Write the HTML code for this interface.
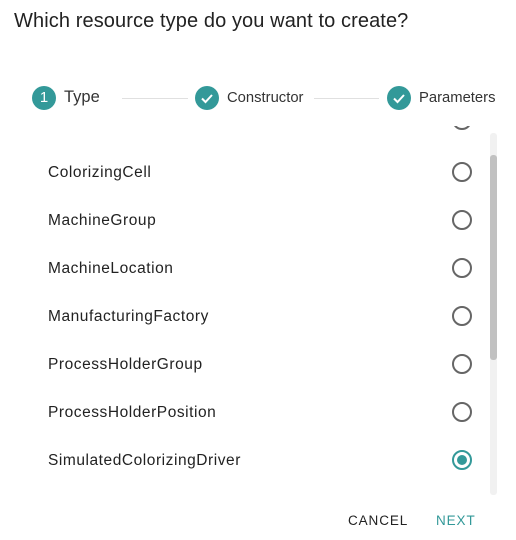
<!DOCTYPE html><html><head><style>
body{margin:0;width:516px;height:540px;background:#fff;font-family:"Liberation Sans",sans-serif;color:#212121;position:relative;overflow:hidden}
.t{position:absolute;left:14px;top:10px;font-size:20px;color:#222;letter-spacing:0.1px}
.c{position:absolute;width:24px;height:24px;border-radius:50%;background:#339999;color:#fff;top:86px;text-align:center;line-height:24px;font-size:15px}
.l{position:absolute;top:90px;font-size:14.8px;color:#333}
.ln{position:absolute;top:98px;height:1px;background:#e0e0e0}
.row{position:absolute;left:48px;font-size:15.5px;color:#222;letter-spacing:0.55px}
.r{position:absolute;left:452px;width:16px;height:16px;border:2px solid #666;border-radius:50%}
</style></head><body>
<div class="t">Which resource type do you want to create?</div>
<div class="c" style="left:32px">1</div><div class="l" style="left:64px;font-size:16.5px;top:88px">Type</div>
<div class="ln" style="left:122px;width:66px"></div>
<div class="c" style="left:195px"><svg width="24" height="24"><path d="M7 12.5l3.5 3.5 6.5-7" stroke="#fff" stroke-width="2" fill="none"/></svg></div><div class="l" style="left:227px">Constructor</div>
<div class="ln" style="left:314px;width:65px"></div>
<div class="c" style="left:387px"><svg width="24" height="24"><path d="M7 12.5l3.5 3.5 6.5-7" stroke="#fff" stroke-width="2" fill="none"/></svg></div><div class="l" style="left:419px">Parameters</div>
<div style="position:absolute;left:0;top:126px;width:516px;height:7px;overflow:hidden">
<div class="r" style="top:-16px"></div>
</div>
<div class="row" style="top:164px">ColorizingCell</div><div class="r" style="top:162px"></div>
<div class="row" style="top:212px">MachineGroup</div><div class="r" style="top:210px"></div>
<div class="row" style="top:260px">MachineLocation</div><div class="r" style="top:258px"></div>
<div class="row" style="top:308px">ManufacturingFactory</div><div class="r" style="top:306px"></div>
<div class="row" style="top:356px">ProcessHolderGroup</div><div class="r" style="top:354px"></div>
<div class="row" style="top:404px">ProcessHolderPosition</div><div class="r" style="top:402px"></div>
<div class="row" style="top:452px">SimulatedColorizingDriver</div><div class="r" style="top:450px;border-color:#339999"><div style="position:absolute;left:3px;top:3px;width:10px;height:10px;border-radius:50%;background:#339999"></div></div>
<div style="position:absolute;left:490px;top:133px;width:7px;height:362px;background:#f1f1f1;border-radius:3px"></div>
<div style="position:absolute;left:490px;top:155px;width:7px;height:205px;background:#c1c1c1;border-radius:3px"></div>
<div style="position:absolute;left:348px;top:513px;font-size:13.5px;letter-spacing:0.9px;color:#222">CANCEL</div>
<div style="position:absolute;left:436px;top:513px;font-size:13.5px;letter-spacing:0.9px;color:#339999">NEXT</div>
</body></html>
